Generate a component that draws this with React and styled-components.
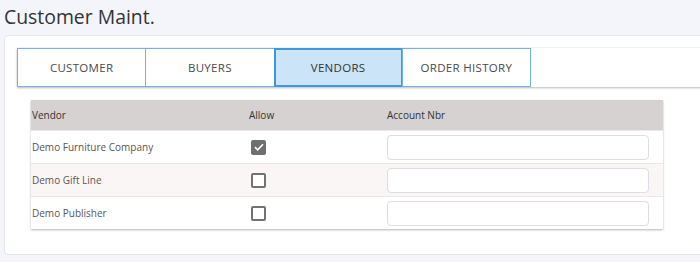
import React from 'react';
import styled, { createGlobalStyle } from 'styled-components';

const GlobalStyle = createGlobalStyle`
  html, body {
    margin: 0;
    padding: 0;
    background: #f4f5fb;
    overflow: hidden;
  }

  body {
    font-family: "Open Sans", "Noto Sans", sans-serif;
  }
`;

const Page = styled.div`
  padding: 0 0 0 4px;
  width: 696px;
`;

const PageTitle = styled.h1`
  color: #333;
  font-size: 19.4px;
  font-weight: 400;
  line-height: 27px;
  margin: 0;
  padding: 3px 0 5px 0;
`;

const Card = styled.section`
  background: #fff;
  border: 1px solid #e4e5ec;
  border-radius: 4px;
  margin-right: -20px;
  padding: 12px 0 25px 12px;
`;

const TabBar = styled.nav`
  background: #fff;
  box-shadow: 0 1px 2px rgba(0, 0, 0, 0.28), 0 -1px 1px rgba(0, 0, 0, 0.03);
  display: flex;
`;

const Tab = styled.button`
  background: ${p => (p.$active ? '#cce4f8' : '#fff')};
  border: ${p => (p.$active ? '2px solid #3d98e0' : '1px solid #72b3ee')};
  box-sizing: border-box;
  color: ${p => (p.$active ? '#333' : '#4a4a4a')};
  cursor: pointer;
  font-family: inherit;
  font-size: 11.5px;
  height: 39px;
  letter-spacing: 0.3px;
  margin-left: -1px;
  padding: 0;
  text-transform: uppercase;
  width: 129.25px;

  &:first-child {
    margin-left: 0;
  }
`;

const VendorTable = styled.div`
  box-shadow: 0 1px 2px rgba(0, 0, 0, 0.3);
  margin: 13px 0 0 14px;
  width: 632px;
`;

const Row = styled.div`
  align-items: center;
  background: ${p => (p.$header ? '#d6d2d1' : p.$alt ? '#faf6f5' : '#fff')};
  border-top: ${p => (p.$header ? 'none' : '1px solid #ebe8e7')};
  box-sizing: border-box;
  display: grid;
  grid-template-columns: 217px 138px 1fr;
  height: ${p => (p.$header ? '30px' : '33px')};
`;

const Cell = styled.div`
  color: ${p => (p.$header ? '#333' : '#5c5555')};
  font-size: 10px;
  padding-left: 1px;
`;

const CheckBox = styled.span`
  align-items: center;
  background: ${p => (p.$checked ? '#6f6f6f' : '#fff')};
  border: 2px solid ${p => (p.$checked ? '#6f6f6f' : '#727272')};
  border-radius: 2px;
  box-sizing: border-box;
  display: inline-flex;
  height: 15px;
  justify-content: center;
  margin-left: 2px;
  vertical-align: middle;
  width: 15px;
`;

const AccountInput = styled.input`
  border: 1px solid #dcdee6;
  border-radius: 4px;
  box-sizing: border-box;
  display: block;
  height: 25px;
  margin: 0;
  width: 262px;
`;

const tabs = ['Customer', 'Buyers', 'Vendors', 'Order History'];

const vendors = [
  { name: 'Demo Furniture Company', allow: true },
  { name: 'Demo Gift Line', allow: false },
  { name: 'Demo Publisher', allow: false },
];

const Check = () => (
  <svg width="10" height="8" viewBox="0 0 10 8">
    <path d="M1 4.2 L3.7 6.8 L9 1.2" fill="none" stroke="#fff" strokeWidth="1.6" />
  </svg>
);

const App = () => (
  <Page>
    <GlobalStyle />
    <PageTitle>Customer Maint.</PageTitle>
    <Card>
      <TabBar>
        {tabs.map(t => (
          <Tab key={t} $active={t === 'Vendors'}>{t}</Tab>
        ))}
      </TabBar>
      <VendorTable>
        <Row $header>
          <Cell $header>Vendor</Cell>
          <Cell $header>Allow</Cell>
          <Cell $header>Account Nbr</Cell>
        </Row>
        {vendors.map((v, i) => (
          <Row key={v.name} $alt={i % 2 === 1}>
            <Cell>{v.name}</Cell>
            <Cell>
              <CheckBox $checked={v.allow}>{v.allow && <Check />}</CheckBox>
            </Cell>
            <Cell>
              <AccountInput type="text" />
            </Cell>
          </Row>
        ))}
      </VendorTable>
    </Card>
  </Page>
);

export default App;
